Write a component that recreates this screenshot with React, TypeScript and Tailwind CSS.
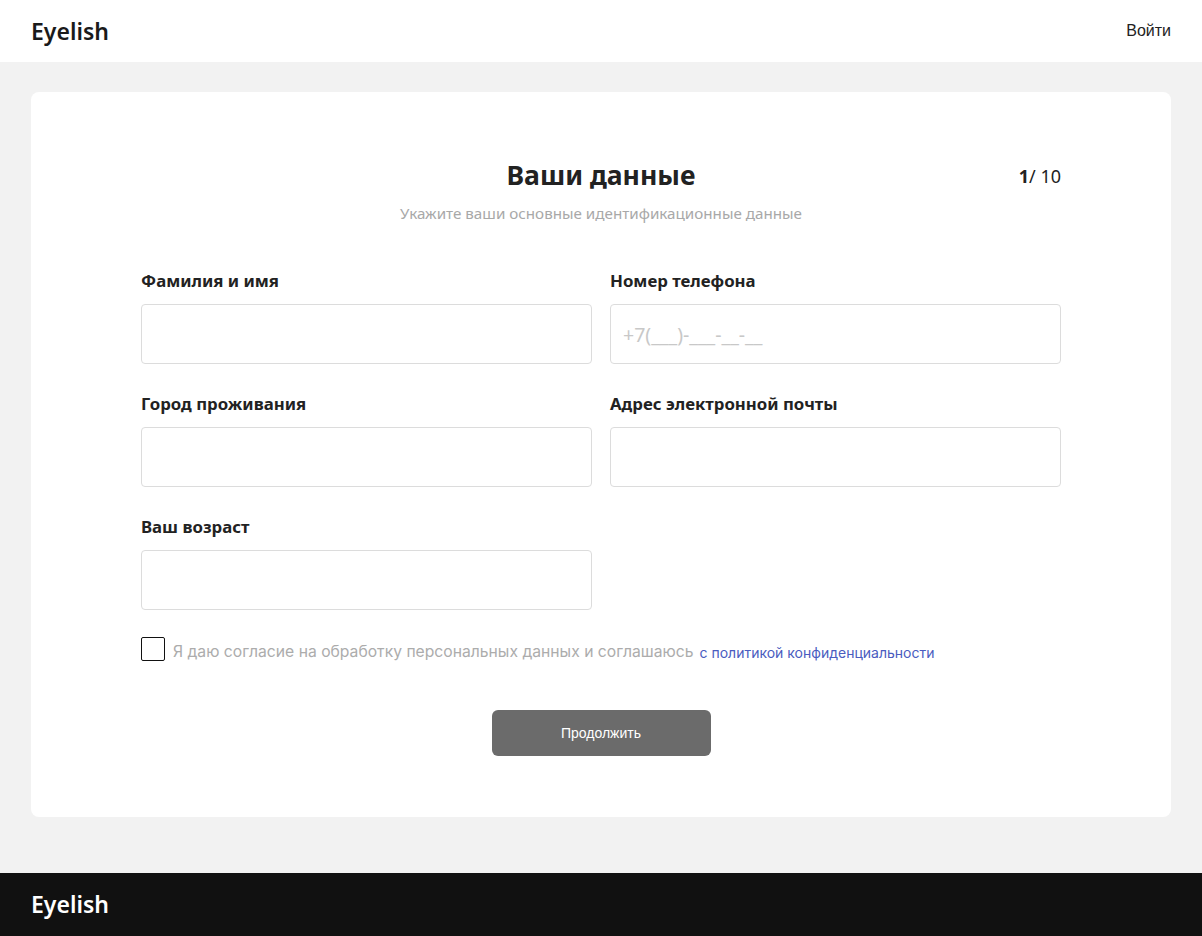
import React, { useState } from 'react';

const HEAD = "font-['Noto_Sans',sans-serif]";

const FIELDS = [
  { label: 'Фамилия и имя', placeholder: '' },
  { label: 'Номер телефона', placeholder: '+7(___)-___-__-__' },
  { label: 'Город проживания', placeholder: '' },
  { label: 'Адрес электронной почты', placeholder: '' },
  { label: 'Ваш возраст', placeholder: '' },
];

function Field({ label, placeholder }: { label: string; placeholder: string }) {
  return (
    <div className="flex flex-col">
      <label className={`${HEAD} text-[16.8px] leading-[20px] font-bold text-[#222]`}>{label}</label>
      <input
        placeholder={placeholder}
        className={`${HEAD} mt-[13px] h-[60px] w-full rounded-[4px] border border-[#dcdcdc] bg-white px-[12px] text-[19.5px] text-[#222] outline-none placeholder:text-[#c8c8c8]`}
      />
    </div>
  );
}

export default function App() {
  const [agree, setAgree] = useState(false);

  return (
    <div className="flex min-h-[936px] flex-col bg-[#f2f2f2]">
      {/* Header */}
      <header className="flex h-[62px] items-center justify-between bg-white px-[31px]">
        <span className={`${HEAD} text-[23px] font-semibold text-[#1a1a1a]`}>Eyelish</span>
        <button className="font-['Liberation_Sans',sans-serif] text-[16px] text-[#222]">Войти</button>
      </header>

      <main className="px-[31px] pt-[30px] pb-[56px]">
        <div className="rounded-[8px] bg-white px-[110px] pt-[66px] pb-[61px]">
          {/* Title block */}
          <div className="relative flex justify-center">
            <h1 className={`${HEAD} text-[26.5px] leading-[34px] font-bold text-[#222]`}>Ваши данные</h1>
            <span className={`${HEAD} absolute right-0 top-[5px] text-[18px] text-[#222]`}>
              <b className="font-bold">1</b>/ 10
            </span>
          </div>
          <p className={`${HEAD} mt-[11px] text-center text-[15.2px] leading-[20px] text-[#a8a8a8]`}>
            Укажите ваши основные идентификационные данные
          </p>

          <div className="mt-[48px] grid grid-cols-2 gap-x-[18px] gap-y-[30px]">
            {FIELDS.map((f) => (
              <Field key={f.label} label={f.label} placeholder={f.placeholder} />
            ))}
          </div>

          <label className="mt-[27px] flex h-[24px] cursor-pointer items-center">
            <span
              onClick={() => setAgree(!agree)}
              className="flex h-[24px] w-[24px] shrink-0 items-center justify-center rounded-[2px] border border-[#111] bg-white"
            >
              {agree && <span className="text-[14px] leading-none">✓</span>}
            </span>
            <span className="ml-[8px] pt-[6px] font-['Inter',sans-serif] text-[15.7px] leading-[24px] text-[#acacac]">
              Я даю согласие на обработку персональных данных и соглашаюсь
            </span>
            <a href="#" className="ml-[6px] pt-[7px] font-['Inter',sans-serif] text-[14px] leading-[24px] text-[#4a5cc0]">
              с политикой конфиденциальности
            </a>
          </label>

          <div className="mt-[49px] flex justify-center">
            <button className="h-[46px] w-[219px] rounded-[6px] bg-[#6b6b6b] font-['Liberation_Sans',sans-serif] text-[14px] text-white">
              Продолжить
            </button>
          </div>
        </div>
      </main>

      <footer className="mt-auto flex h-[63px] items-center bg-[#111] px-[31px]">
        <span className={`${HEAD} text-[23px] font-semibold text-white`}>Eyelish</span>
      </footer>
    </div>
  );
}
